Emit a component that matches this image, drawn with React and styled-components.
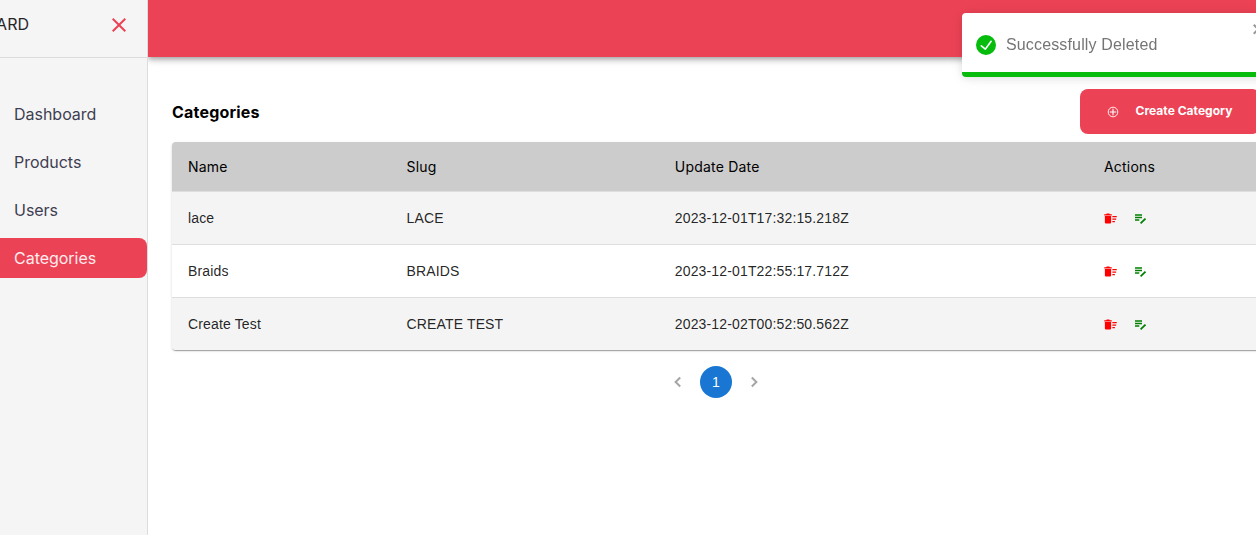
import React from "react";
import styled, { createGlobalStyle } from "styled-components";
import { MdClose, MdDeleteSweep } from "react-icons/md";

const accent = "#ec4255";
const inter = `Inter, "Liberation Sans", sans-serif`;
const arial = `"Liberation Sans", Arial, sans-serif`;

const GlobalStyle = createGlobalStyle`
  * { box-sizing: border-box; }
  body { margin: 0; background: #fff; overflow: hidden; font-family: ${inter}; }
`;

const Layout = styled.div`
  display: flex;
  height: 100vh;
  overflow: hidden;
`;

const Sidebar = styled.aside`
  flex: 0 0 148px;
  display: flex;
  flex-direction: column;
  background: #f5f5f5;
  border-right: 1px solid #dcdcdc;
  overflow: hidden;
`;

const SidebarHeader = styled.div`
  height: 58px;
  display: flex;
  align-items: center;
  justify-content: flex-end;
  gap: 78px;
  padding: 0 16px 8px 0;
  border-bottom: 1px solid #dcdcdc;
`;

const Brand = styled.span`
  font-size: 16px;
  line-height: 24px;
  margin-top: -2px;
  color: #262626;
`;

const CloseIcon = styled(MdClose)`
  flex: none;
  font-size: 24px;
  color: ${accent};
`;

const Nav = styled.nav`
  display: flex;
  flex-direction: column;
  gap: 8px;
  padding-top: 36px;
`;

const NavItem = styled.a`
  height: 40px;
  padding-left: 14px;
  display: flex;
  align-items: center;
  border-radius: 0 8px 8px 0;
  font-size: 16px;
  letter-spacing: -0.02px;
  color: ${(p) => (p.$active ? "#ffecee" : "#3e3e52")};
  background: ${(p) => (p.$active ? accent : "transparent")};
`;

const Main = styled.main`
  flex: none;
  width: 1136px;
`;

const TopBar = styled.header`
  height: 57px;
  background: ${accent};
  box-shadow: 0 2px 4px -1px rgba(0, 0, 0, 0.2), 0 4px 5px rgba(0, 0, 0, 0.14),
    0 1px 10px rgba(0, 0, 0, 0.12);
  clip-path: inset(0 0 -20px 0);
`;

const Content = styled.section`
  padding: 32px 24px;
`;

const TitleRow = styled.div`
  display: flex;
  align-items: center;
  justify-content: space-between;
  height: 45px;
  margin-bottom: 8px;
`;

const Title = styled.h1`
  margin: 0;
  font-size: 16px;
  font-weight: 700;
  letter-spacing: 0.2px;
  color: #000;
`;

const CreateButton = styled.button`
  width: 180px;
  height: 45px;
  padding: 0 27px 2px;
  display: flex;
  align-items: center;
  gap: 16.5px;
  border: 0;
  border-radius: 8px;
  background: ${accent};
  color: #fff;
  font: 700 12px ${inter};
  letter-spacing: 0.03px;
  white-space: nowrap;

  svg { flex: none; margin-top: 3px; }
`;

const Table = styled.div`
  border-radius: 4px;
  overflow: hidden;
  box-shadow: 0 2px 1px -1px rgba(0, 0, 0, 0.2), 0 1px 1px rgba(0, 0, 0, 0.14),
    0 1px 3px rgba(0, 0, 0, 0.12);
`;

const Row = styled.div`
  display: grid;
  grid-template-columns: 218.5px 268.3px 429.2px 172px;
  align-items: center;
  height: 53px;
  background: ${(p) => (p.$striped ? "#f4f4f4" : "#fff")};
  border-bottom: 1px solid #dedede;
  font: 14px ${arial};
  letter-spacing: 0.15px;
  color: rgba(0, 0, 0, 0.87);

  &:last-child {
    height: 52px;
    border-bottom: 0;
  }
`;

const HeadRow = styled(Row)`
  height: 50px;
  background: #ccc;
  font: 14px ${inter};
  letter-spacing: 0.2px;
  color: #000;
`;

const Cell = styled.div`
  padding-left: 16px;
`;

const ActionCell = styled(Cell)`
  display: flex;
  gap: 15px;
  padding: 0 0 0 15.5px;
  font-size: 15px;
`;

const Pagination = styled.div`
  display: flex;
  justify-content: center;
  align-items: center;
  gap: 12px;
  margin-top: 16px;
`;

const PageArrow = styled.svg`
  width: 20px;
  height: 20px;
  fill: none;
  stroke: #a6a6a6;
  stroke-width: 2px;
`;

const Page = styled.span`
  width: 32px;
  height: 32px;
  border-radius: 50%;
  display: flex;
  align-items: center;
  justify-content: center;
  background: #1976d2;
  color: #fff;
  font: 14px ${arial};
`;

const Toast = styled.div`
  position: fixed;
  top: 13px;
  left: 962px;
  width: 312px;
  height: 64px;
  padding: 8px 8px 8px 14px;
  display: flex;
  align-items: center;
  border-radius: 4px;
  overflow: hidden;
  background: #fff;
  color: #757575;
  font: 16px ${arial};
  letter-spacing: 0.15px;
  box-shadow: 0 1px 10px rgba(0, 0, 0, 0.1), 0 2px 15px rgba(0, 0, 0, 0.05);
`;

const ToastText = styled.span`
  flex: 1;
  margin-left: 10px;
`;

const ToastClose = styled.svg`
  align-self: flex-start;
  opacity: 0.4;
`;

const ToastProgress = styled.div`
  position: absolute;
  left: 0;
  bottom: 0;
  width: 100%;
  height: 5px;
  background: #07bc0c;
`;

const EditIcon = () => (
  <svg width="15" height="15" viewBox="0 0 15 15" fill="none" stroke="green">
    <path d="M2 4h7M2 6.5h7M2 9h4.3" strokeWidth="1.3" />
    <path d="M7.6 12.4l4.9-4.7" strokeWidth="1.8" />
  </svg>
);

const navItems = ["Dashboard", "Products", "Users", "Categories"];
const categories = [
  { name: "lace", slug: "LACE", updated: "2023-12-01T17:32:15.218Z" },
  { name: "Braids", slug: "BRAIDS", updated: "2023-12-01T22:55:17.712Z" },
  { name: "Create Test", slug: "CREATE TEST", updated: "2023-12-02T00:52:50.562Z" },
];

export default function App() {
  return (
    <>
      <GlobalStyle />
      <Layout>
        <Sidebar>
          <SidebarHeader>
            <Brand>DASHBOARD</Brand>
            <CloseIcon />
          </SidebarHeader>
          <Nav>
            {navItems.map((item) => (
              <NavItem key={item} $active={item === "Categories"}>{item}</NavItem>
            ))}
          </Nav>
        </Sidebar>
        <Main>
          <TopBar />
          <Content>
            <TitleRow>
              <Title>Categories</Title>
              <CreateButton>
                <svg width="12" height="12" viewBox="0 0 12 12" fill="none" stroke="#fff">
                  <circle cx="6" cy="6" r="4.8" strokeWidth="0.9" />
                  <path d="M6 2.7v6.6M2.7 6h6.6" strokeWidth="1.1" />
                </svg>
                Create Category
              </CreateButton>
            </TitleRow>
            <Table>
              <HeadRow>
                <Cell>Name</Cell>
                <Cell>Slug</Cell>
                <Cell>Update Date</Cell>
                <Cell>Actions</Cell>
              </HeadRow>
              {categories.map((c, i) => (
                <Row key={c.slug} $striped={i % 2 === 0}>
                  <Cell>{c.name}</Cell>
                  <Cell>{c.slug}</Cell>
                  <Cell>{c.updated}</Cell>
                  <ActionCell>
                    <MdDeleteSweep color="red" />
                    <EditIcon />
                  </ActionCell>
                </Row>
              ))}
            </Table>
            <Pagination>
              <PageArrow viewBox="0 0 20 20"><path d="M12.2 5.5L7.6 10l4.6 4.5" /></PageArrow>
              <Page>1</Page>
              <PageArrow viewBox="0 0 20 20"><path d="M7.8 5.5l4.6 4.5-4.6 4.5" /></PageArrow>
            </Pagination>
          </Content>
        </Main>
      </Layout>
      <Toast>
        <svg width="20" height="20" viewBox="0 0 24 24" fill="#07bc0c">
          <path d="M12 0a12 12 0 1012 12A12.014 12.014 0 0012 0zm6.927 8.2l-6.845 9.289a1.011 1.011 0 01-1.43.188l-4.888-3.908a1 1 0 111.25-1.562l4.076 3.261 6.227-8.451a1 1 0 111.61 1.183z" />
        </svg>
        <ToastText>Successfully Deleted</ToastText>
        <ToastClose width="14" height="16" viewBox="0 0 14 16">
          <path
            fillRule="evenodd"
            d="M7.71 8.23l3.75 3.75-1.48 1.48-3.75-3.75-3.75 3.75L1 11.98l3.75-3.75L1 4.48 2.48 3l3.75 3.75L9.98 3l1.48 1.48-3.75 3.75z"
          />
        </ToastClose>
        <ToastProgress />
      </Toast>
    </>
  );
}
